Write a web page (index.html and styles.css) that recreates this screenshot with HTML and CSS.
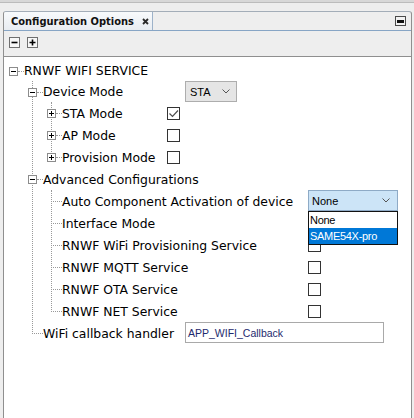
FILE: index.html
```html
<!DOCTYPE html>
<html>
<head>
<meta charset="utf-8">
<title>Configuration Options</title>
<link rel="stylesheet" href="styles.css">
</head>
<body>
<div class="topline"></div>
<div class="panel">
  <div class="header">
    <div class="tab">
      <span class="tab-title">Configuration Options</span>
      <svg class="close" width="7" height="7" viewBox="0 0 7 7"><path d="M1 1L6 6M6 1L1 6" stroke="#2a2a2a" stroke-width="1.8"/></svg>
    </div>
    <div class="header-fill">
      <svg class="minimize" width="11" height="10" viewBox="0 0 11 10"><rect x="0.5" y="0.5" width="10" height="9" fill="#f2f2f2" stroke="#4a4a4a"/><rect x="2" y="4" width="7" height="3" fill="#111"/></svg>
    </div>
  </div>
  <div class="toolbar">
    <span class="tool"><svg width="11" height="11" viewBox="0 0 11 11"><rect x="0.5" y="0.5" width="10" height="10" fill="#f7f7f7" stroke="#6f6f6f"/><path d="M2.5 5.5h6" stroke="#000" stroke-width="1.6"/></svg></span>
    <span class="tool"><svg width="11" height="11" viewBox="0 0 11 11"><rect x="0.5" y="0.5" width="10" height="10" fill="#f7f7f7" stroke="#6f6f6f"/><path d="M2.5 5.5h6M5.5 2.5v6" stroke="#000" stroke-width="1.6"/></svg></span>
  </div>
  <div class="content">
    <div class="tree">
      <div class="row short">
        <svg class="exp" width="9" height="9" viewBox="0 0 9 9"><rect x="0.5" y="0.5" width="8" height="8" fill="#fff" stroke="#8c8c8c"/><path d="M2 4.5h5" stroke="#000"/></svg>
        <span class="twig"></span>
        <span class="label">RNWF WIFI SERVICE</span>
      </div>
      <div class="children g-main">
        <div class="row short">
          <svg class="exp" width="9" height="9" viewBox="0 0 9 9"><rect x="0.5" y="0.5" width="8" height="8" fill="#fff" stroke="#8c8c8c"/><path d="M2 4.5h5" stroke="#000"/></svg>
          <span class="twig"></span>
          <span class="label">Device Mode</span>
          <div class="combo"><span>STA</span><svg width="8" height="5" viewBox="0 0 8 5"><path d="M0.5 0.5L4 4L7.5 0.5" fill="none" stroke="#555"/></svg></div>
        </div>
        <div class="children g-modes">
          <div class="row">
            <svg class="exp" width="9" height="9" viewBox="0 0 9 9"><rect x="0.5" y="0.5" width="8" height="8" fill="#fff" stroke="#8c8c8c"/><path d="M2 4.5h5M4.5 2v5" stroke="#000"/></svg>
            <span class="twig"></span>
            <span class="label">STA Mode</span>
            <span class="check"><svg width="11" height="11" viewBox="0 0 11 11"><path d="M1.5 5.5L4.5 8.5L10 2.5" fill="none" stroke="#4d4d4d" stroke-width="1.2"/></svg></span>
          </div>
          <div class="row">
            <svg class="exp" width="9" height="9" viewBox="0 0 9 9"><rect x="0.5" y="0.5" width="8" height="8" fill="#fff" stroke="#8c8c8c"/><path d="M2 4.5h5M4.5 2v5" stroke="#000"/></svg>
            <span class="twig"></span>
            <span class="label">AP Mode</span>
            <span class="check"></span>
          </div>
          <div class="row">
            <svg class="exp" width="9" height="9" viewBox="0 0 9 9"><rect x="0.5" y="0.5" width="8" height="8" fill="#fff" stroke="#8c8c8c"/><path d="M2 4.5h5M4.5 2v5" stroke="#000"/></svg>
            <span class="twig"></span>
            <span class="label">Provision Mode</span>
            <span class="check"></span>
          </div>
        </div>
        <div class="row">
          <svg class="exp" width="9" height="9" viewBox="0 0 9 9"><rect x="0.5" y="0.5" width="8" height="8" fill="#fff" stroke="#8c8c8c"/><path d="M2 4.5h5" stroke="#000"/></svg>
          <span class="twig"></span>
          <span class="label">Advanced Configurations</span>
        </div>
        <div class="children g-adv">
          <div class="row">
            <span class="twig leaf"></span>
            <span class="label">Auto Component Activation of device</span>
            <div class="combo-wrap">
              <div class="combo open"><span>None</span><svg width="8" height="5" viewBox="0 0 8 5"><path d="M0.5 0.5L4 4L7.5 0.5" fill="none" stroke="#555"/></svg></div>
              <div class="list">
                <div class="item">None</div>
                <div class="item selected">SAME54X-pro</div>
              </div>
            </div>
          </div>
          <div class="row">
            <span class="twig leaf"></span>
            <span class="label">Interface Mode</span>
            <span class="check"></span>
          </div>
          <div class="row">
            <span class="twig leaf"></span>
            <span class="label">RNWF WiFi Provisioning Service</span>
            <span class="check"></span>
          </div>
          <div class="row">
            <span class="twig leaf"></span>
            <span class="label">RNWF MQTT Service</span>
            <span class="check"></span>
          </div>
          <div class="row">
            <span class="twig leaf"></span>
            <span class="label">RNWF OTA Service</span>
            <span class="check"></span>
          </div>
          <div class="row">
            <span class="twig leaf"></span>
            <span class="label">RNWF NET Service</span>
            <span class="check"></span>
          </div>
        </div>
        <div class="row">
          <span class="twig leaf"></span>
          <span class="label">WiFi callback handler</span>
          <div class="field">APP_WIFI_Callback</div>
        </div>
      </div>
    </div>
  </div>
</div>
</body>
</html>
```
FILE: styles.css
```css
* { box-sizing: border-box; }
html, body { margin: 0; padding: 0; }
body {
  width: 414px;
  height: 418px;
  overflow: hidden;
  background: #eeeeee;
  font-family: "DejaVu Sans", sans-serif;
  font-size: 12.4px;
  color: #000;
}
.topline {
  height: 3px;
  background: #d8d8d8;
  border-bottom: 1px solid #bcbcbc;
}
.panel {
  margin: 8px 2px 0 3px;
  height: 407px;
  display: flex;
  flex-direction: column;
  border: 1px solid #8f8f8f;
  border-top-color: #a3adb8;
  border-bottom: none;
  border-radius: 3px 3px 0 0;
}
.header {
  display: flex;
  height: 19px;
  border-bottom: 1px solid #87a5c5;
}
.tab {
  width: 149px;
  display: flex;
  align-items: center;
  padding-left: 7px;
  background: linear-gradient(#f8fafc, #e8ecf1);
  border-right: 1px solid #9db2c9;
  border-radius: 2px 0 0 0;
}
.tab-title {
  font-family: "DejaVu Sans Condensed", "DejaVu Sans", sans-serif;
  font-weight: bold;
  font-size: 11px;
  color: #111;
  white-space: nowrap;
}
.close { margin-left: 8px; }
.header-fill {
  flex: 1;
  display: flex;
  align-items: center;
  justify-content: flex-end;
  padding-right: 5px;
}
.toolbar {
  height: 26px;
  display: flex;
  align-items: flex-start;
  gap: 7px;
  padding: 6px 0 0 5px;
  border-bottom: 1px solid #8f8f8f;
}
.tool { display: block; width: 11px; height: 11px; }
.tool svg { display: block; }
.content {
  flex: 1;
  background: #fff;
  padding-top: 3px;
}
.tree {
  position: relative;
  z-index: 0;
}
.row {
  display: flex;
  align-items: center;
  height: 22px;
  padding-left: 5px;
}
.row.short { height: 21px; }
.exp {
  display: block;
  flex: none;
  align-self: flex-start;
  margin-top: 7px;
}
.twig {
  flex: none;
  align-self: flex-start;
  margin-top: 11px;
  width: 6px;
  height: 1px;
  border-top: 1px dotted #999;
}
.twig.leaf {
  margin-left: 4px;
  width: 11px;
}
.label {
  white-space: nowrap;
  flex: none;
}
.children {
  position: relative;
  margin-left: 19px;
}
.children::before {
  content: "";
  position: absolute;
  left: 9px;
  top: 0;
  bottom: 10px;
  border-left: 1px dotted #999;
  z-index: -1;
}
.g-main > .row > .label { width: 142px; }
.g-modes > .row > .label { width: 105px; }
.g-adv > .row > .label { width: 246px; }
.check {
  display: block;
  flex: none;
  align-self: flex-start;
  margin-top: 5px;
  width: 13px;
  height: 13px;
  border: 1px solid #333;
  background: #fff;
}
.check svg { display: block; }
.combo {
  flex: none;
  align-self: flex-start;
  width: 52px;
  height: 21px;
  display: flex;
  align-items: center;
  justify-content: space-between;
  padding: 0 6px 0 4px;
  border: 1px solid #adadad;
  background: #e5e5e5;
  font-family: "Liberation Sans", sans-serif;
  font-size: 11px;
}
.combo-wrap {
  position: relative;
  align-self: flex-start;
}
.combo.open {
  width: 90px;
  padding: 0 7px 0 3px;
  background: #cce4f7;
  border-color: #8eaac6;
}
.list {
  position: absolute;
  left: 0;
  top: 100%;
  width: 90px;
  border: 1px solid #111;
  background: #fff;
  z-index: 2;
  font-family: "Liberation Sans", sans-serif;
  font-size: 11px;
  letter-spacing: -0.3px;
}
.item {
  height: 16px;
  line-height: 16px;
  padding-left: 1px;
}
.item.selected {
  background: #0078d7;
  color: #fff;
}
.field {
  flex: none;
  align-self: flex-start;
  width: 199px;
  height: 21px;
  display: flex;
  align-items: center;
  padding-left: 2px;
  border: 1px solid #a9a9a9;
  background: #fff;
  font-family: "Liberation Sans", sans-serif;
  font-size: 10.5px;
  color: #1e2a6e;
}
```
